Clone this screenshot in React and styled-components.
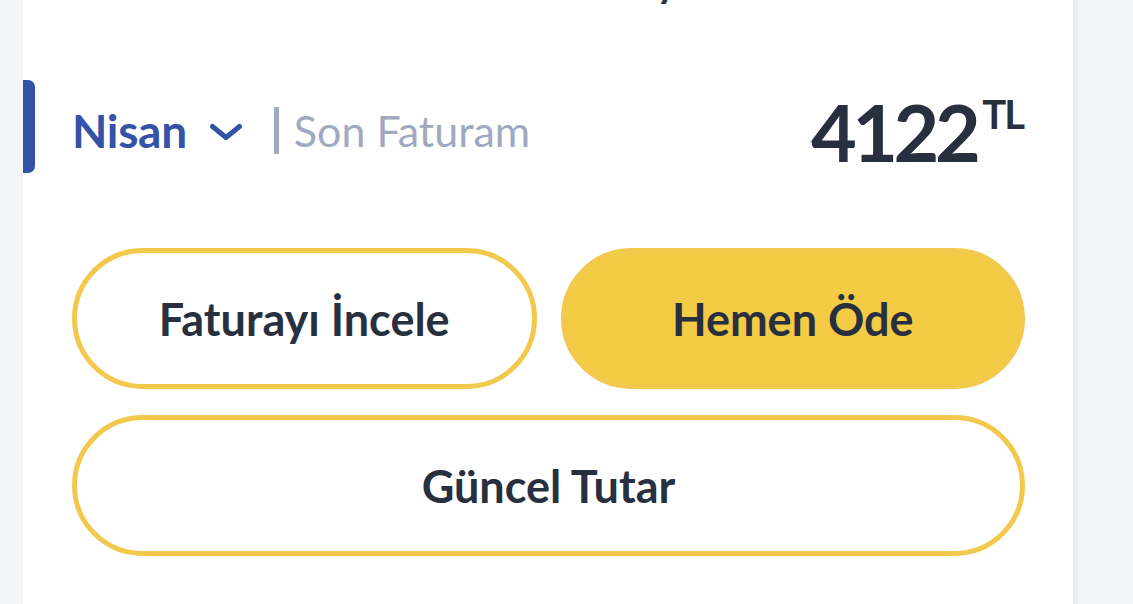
import React from "react";
import styled, { createGlobalStyle } from "styled-components";

const Global = createGlobalStyle`
  html, body { margin: 0; padding: 0; }
  body {
    background: #f4f5f7;
    font-family: Lato, "Open Sans", sans-serif;
    overflow: hidden;
  }
`;

const Page = styled.div`
  padding-left: 23px;
`;

const Card = styled.section`
  width: 1050px;
  min-height: 720px;
  margin-top: -48px;
  background: #ffffff;
  box-shadow: 3px 0 6px rgba(30, 40, 70, 0.06);
`;

const Title = styled.h2`
  margin: 0;
  height: 60px;
  line-height: 60px;
  font-size: 40px;
  font-weight: 700;
  color: #28303f;
  text-align: center;
  padding-left: 40px;
`;

const Header = styled.div`
  margin-top: 68px;
  height: 93px;
  display: flex;
  align-items: center;
  padding-right: 50px;
`;

const Marker = styled.span`
  width: 12px;
  height: 93px;
  background: #3352a7;
  border-radius: 0 7px 7px 0;
  flex: none;
`;

const Period = styled.div`
  display: flex;
  align-items: center;
  margin-left: 37px;
  padding-top: 8px;
`;

const Month = styled.span`
  font-size: 46px;
  font-weight: 700;
  color: #3453a7;
  letter-spacing: -0.3px;
`;

const Chevron = styled.svg`
  width: 34px;
  height: 18px;
  margin-left: 22px;
  margin-top: 2px;
`;

const Divider = styled.span`
  width: 5px;
  height: 47px;
  background: #a2aac2;
  border-radius: 1px;
  margin-left: 31px;
`;

const Caption = styled.span`
  font-size: 43px;
  font-weight: 400;
  color: #a1a9c1;
  margin-left: 15px;
`;

const Amount = styled.div`
  margin-left: auto;
  display: flex;
  align-items: flex-start;
  color: #28303f;
  font-weight: 700;
  padding-top: 10px;
`;

const Value = styled.span`
  font-size: 79px;
  line-height: 80px;
  letter-spacing: -4.5px;
`;

const Currency = styled.sup`
  font-size: 40px;
  line-height: 40px;
  letter-spacing: -2px;
  vertical-align: baseline;
  margin-left: 6px;
  margin-top: 2px;
`;

const Actions = styled.div`
  margin-top: 75px;
  padding: 0 48px 0 49px;
  display: grid;
  grid-template-columns: 1fr 1fr;
  column-gap: 24px;
  row-gap: 26px;
`;

const Button = styled.button`
  grid-column: ${(p) => (p.$wide ? "1 / -1" : "auto")};
  height: 141px;
  border-radius: 71px;
  border: 5px solid #f2c94c;
  background: ${(p) => (p.$filled ? "#f4cb45" : "#ffffff")};
  color: #28303f;
  font-family: Lato, "Open Sans", sans-serif;
  font-size: 45px;
  font-weight: 700;
  cursor: pointer;
  padding: 0;
`;

export default function App() {
  return (
    <>
      <Global />
      <Page>
        <Card>
          <Title>Fatura Detayı</Title>
          <Header>
            <Marker />
            <Period>
              <Month>Nisan</Month>
              <Chevron viewBox="0 0 34 18" fill="none">
                <polyline
                  points="3.5,3.5 17,14.5 30.5,3.5"
                  stroke="#3453a7"
                  strokeWidth="5"
                  strokeLinecap="round"
                  strokeLinejoin="round"
                />
              </Chevron>
              <Divider />
              <Caption>Son Faturam</Caption>
            </Period>
            <Amount>
              <Value>4122</Value>
              <Currency>TL</Currency>
            </Amount>
          </Header>
          <Actions>
            <Button>Faturayı İncele</Button>
            <Button $filled>Hemen Öde</Button>
            <Button $wide>Güncel Tutar</Button>
          </Actions>
        </Card>
      </Page>
    </>
  );
}
